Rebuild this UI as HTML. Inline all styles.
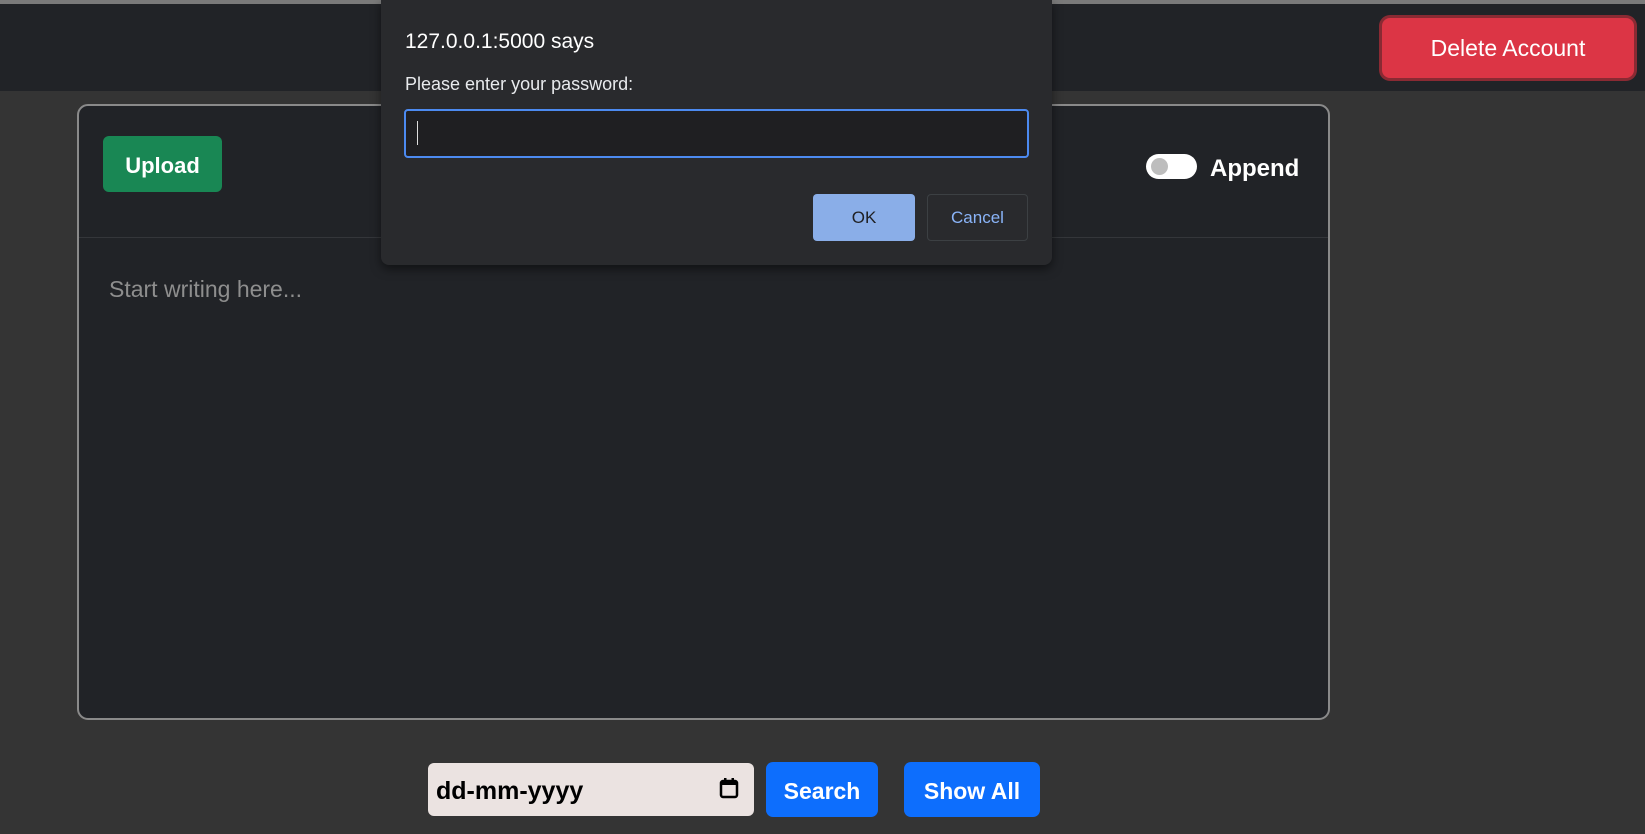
<!DOCTYPE html>
<html><head><meta charset="utf-8"><style>
*{box-sizing:border-box;margin:0;padding:0}
body{width:1645px;height:834px;overflow:hidden;background:#343434;font-family:"Liberation Sans",sans-serif;position:relative}
.abs{position:absolute}
.hdr{left:0;top:0;width:1645px;height:91px;background:#212327;border-top:4px solid #7a7a7a}
.del{left:1382px;top:18px;width:252px;height:60px;border-radius:8px;background:#dc3545;box-shadow:0 0 0 3px #8a2a33;color:#fff;font-size:23px;display:flex;align-items:center;justify-content:center}
.card{left:77px;top:104px;width:1253px;height:616px;border:2px solid #8a8a8a;border-radius:11px;background:#212327}
.div{left:79px;top:237px;width:1249px;height:1px;background:#34363a}
.up{left:103px;top:136px;width:119px;height:56px;border-radius:6px;background:#198754;color:#fff;font-weight:bold;font-size:22px;display:flex;align-items:center;justify-content:center;padding-top:4px}
.tog{left:1146px;top:154px;width:51px;height:25px;border-radius:13px;background:#fff}
.tog:after{content:"";position:absolute;left:5px;top:4px;width:17px;height:17px;border-radius:50%;background:#bdbdbd}
.app{left:1210px;top:155px;color:#fff;font-weight:bold;font-size:24px}
.ph{left:109px;top:276px;color:#8e8e8e;font-size:23px}
.dlg{left:381px;top:0;width:671px;height:265px;background:#292a2d;border-radius:0 0 8px 8px;box-shadow:0 4px 10px rgba(0,0,0,.5)}
.t1{left:405px;top:30px;color:#fff;font-size:21px}
.t2{left:405px;top:74px;color:#e8eaed;font-size:18px}
.inp{left:404px;top:109px;width:625px;height:49px;border:2px solid #4c8af0;border-radius:4px;background:#1f1f22}
.caret{left:417px;top:121px;width:1px;height:24px;background:#ddd}
.ok{left:813px;top:194px;width:102px;height:47px;border-radius:4px;background:#8aaee8;color:#202124;font-size:17px;display:flex;align-items:center;justify-content:center}
.cn{left:927px;top:194px;width:101px;height:47px;border-radius:4px;border:1px solid #3c4043;color:#8ab4f8;font-size:17px;display:flex;align-items:center;justify-content:center}
.date{left:428px;top:763px;width:326px;height:53px;border-radius:6px;background:#ebe3e1;color:#000;font-weight:bold;font-size:25px;padding-left:8px;padding-top:4px;display:flex;align-items:center}
.btn{top:762px;height:55px;border-radius:7px;background:#0d6efd;color:#fff;font-weight:bold;font-size:23px;display:flex;align-items:center;justify-content:center;padding-top:3px}
</style></head><body>
<div class="abs hdr"></div>
<div class="abs del">Delete Account</div>
<div class="abs card"></div>
<div class="abs div"></div>
<div class="abs up">Upload</div>
<div class="abs tog"></div>
<div class="abs app">Append</div>
<div class="abs ph">Start writing here...</div>
<div class="abs dlg"></div>
<div class="abs t1">127.0.0.1:5000 says</div>
<div class="abs t2">Please enter your password:</div>
<div class="abs inp"></div>
<div class="abs caret"></div>
<div class="abs ok">OK</div>
<div class="abs cn">Cancel</div>
<div class="abs date">dd-mm-yyyy
<svg style="position:absolute;left:291px;top:14px" width="20" height="22" viewBox="0 0 20 22"><rect x="2" y="4" width="16" height="16" rx="2" fill="none" stroke="#000" stroke-width="2.5"/><rect x="2" y="4" width="16" height="4" fill="#000"/><rect x="5" y="1" width="2.5" height="4" fill="#000"/><rect x="12.5" y="1" width="2.5" height="4" fill="#000"/></svg></div>
<div class="abs btn" style="left:766px;width:112px">Search</div>
<div class="abs btn" style="left:904px;width:136px">Show All</div>
</body></html>
